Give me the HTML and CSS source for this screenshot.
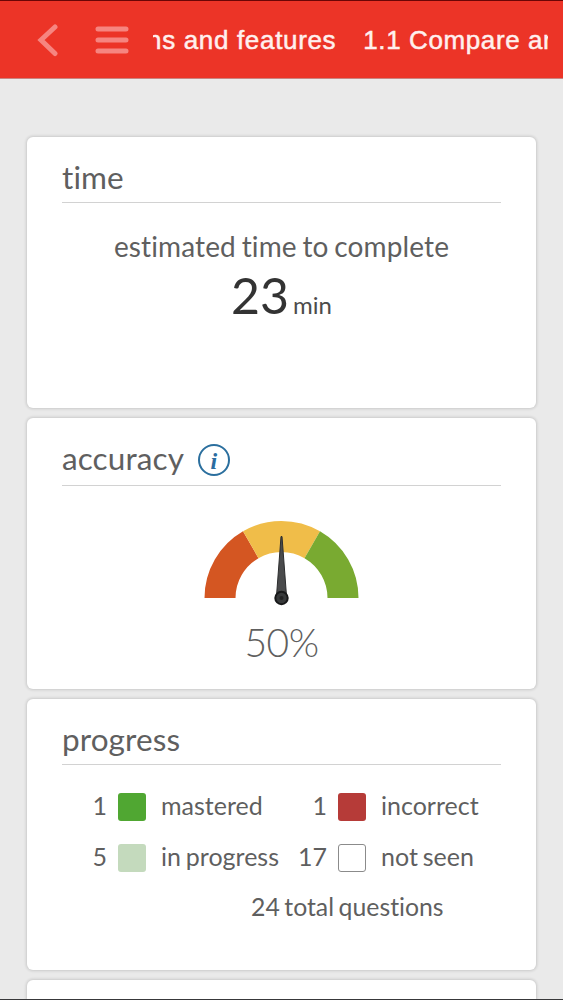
FILE: index.html
```html
<!DOCTYPE html>
<html lang="en">
  <head>
    <meta charset="UTF-8" />
    <meta name="viewport" content="width=device-width, initial-scale=1.0" />
    <title>Study progress</title>
    <link rel="stylesheet" href="styles.css">
  </head>
  <body>
    <header class="topbar">
      <svg class="icon-back" width="22" height="34" viewBox="0 0 22 34">
        <path d="M19 4 L5 17 L19 30.5" />
      </svg>
      <svg class="icon-menu" width="34" height="28" viewBox="0 0 34 28">
        <path d="M3 3H31M3 14H31M3 25H31" />
      </svg>
      <div class="ticker">
        <span class="ticker-item first">ns and features</span>
        <span class="ticker-item">1.1 Compare and</span>
      </div>
    </header>

    <main class="cards">
      <section class="card">
        <h2>time</h2>
        <div class="time-body">
          <p class="label">estimated time to complete</p>
          <p class="minutes"><span class="number">23</span><span class="unit">min</span></p>
        </div>
      </section>

      <section class="card">
        <h2 class="with-info">
          <span>accuracy</span>
          <span class="info">i</span>
        </h2>
        <div class="gauge">
          <svg width="155" height="88" viewBox="0.5 0 155 88">
            <!-- red, yellow and green bands, 60 degrees each -->
            <path fill="#d45622" d="M1 78A77 77 0 0 1 39.5 11.3L55 38.2A46 46 0 0 0 32 78Z" />
            <path fill="#f0bd49" d="M39.5 11.3A77 77 0 0 1 116.5 11.3L101 38.2A46 46 0 0 0 55 38.2Z" />
            <path fill="#79aa31" d="M116.5 11.3A77 77 0 0 1 155 78H124A46 46 0 0 0 101 38.2Z" />
            <!-- needle -->
            <path fill="#4a4b4c" stroke="#2c2d2e" stroke-width="1" d="M77.5 16.5H78.5L83 76H73Z" />
            <circle cx="78" cy="78" r="6.2" fill="#37393a" stroke="#171819" stroke-width="2" />
            <circle cx="78" cy="78" r="2" fill="#202122" />
          </svg>
          <p class="percent">50%</p>
        </div>
      </section>

      <section class="card">
        <h2>progress</h2>
        <div class="legend">
          <span class="count">1</span><span class="box mastered"></span><span class="name">mastered</span>
          <span class="count">1</span><span class="box incorrect"></span><span class="name">incorrect</span>
          <span class="count">5</span><span class="box in-progress"></span><span class="name">in progress</span>
          <span class="count">17</span><span class="box not-seen"></span><span class="name">not seen</span>
        </div>
        <p class="total">24 total questions</p>
      </section>

      <section class="card next"></section>
    </main>
  </body>
</html>
```

FILE: styles.css
```css
* {
  box-sizing: border-box;
  margin: 0;
  padding: 0;
}

body {
  font-family: Lato, "Liberation Sans", sans-serif;
  font-variant-ligatures: none;
  height: 100vh;
  overflow: hidden;
  background: #eaeaea;
  color: #5f5f5f;
  border-bottom: 1px solid #38383a;
}

/* Top bar */
.topbar {
  display: flex;
  align-items: center;
  height: 79px;
  padding: 0 15px 0 36px;
  background: #ec3427;
  border-top: 1px solid #6b0505;
  border-bottom: 1px solid #c98480;
}

.topbar svg {
  flex-shrink: 0;
  fill: none;
  stroke: #f68580;
  stroke-linecap: round;
  stroke-width: 5;
}

.icon-menu {
  margin-left: 37px;
}

.ticker {
  display: flex;
  flex: 1;
  margin-left: 24px;
  overflow: hidden;
  white-space: nowrap;
  font-family: "Liberation Sans", Arial, sans-serif;
  font-size: 26px;
  line-height: 34px;
  padding-top: 1px;
  letter-spacing: 0.6px;
  color: #fff0ee;
  -webkit-text-stroke: 0.5px #fff0ee;
}

.ticker-item {
  flex-shrink: 0;
  margin-left: 27px;
}

.ticker-item.first {
  margin-left: -6px;
  letter-spacing: 0.67px;
}

/* Cards */
.cards {
  display: flex;
  flex-direction: column;
  gap: 10px;
  padding: 58px 27px 0;
}

.card {
  flex-shrink: 0;
  height: 271px;
  padding: 22px 35px 0;
  background: #fff;
  border-radius: 6px;
  box-shadow: 0 0 3px 1px rgba(0, 0, 0, 0.14);
}

.card.next {
  height: 19px;
  padding: 0;
  border-radius: 6px 6px 0 0;
}

.card h2 {
  height: 44px;
  font-size: 31.5px;
  font-weight: 400;
  line-height: 37px;
  letter-spacing: 0.1px;
  border-bottom: 1px solid #d2d2d2;
}

.card h2.with-info {
  display: flex;
  gap: 14px;
  height: 46px;
}

.info {
  width: 32px;
  height: 32px;
  margin-top: 4px;
  border: 2px solid #2b6f9e;
  border-radius: 50%;
  font: italic bold 24px/31px "Liberation Serif", serif;
  text-align: center;
  color: #2b6ca0;
}

/* Time */
.time-body {
  padding-top: 26px;
  text-align: center;
}

.label {
  font-size: 28px;
  line-height: 34px;
  letter-spacing: 0.12px;
  word-spacing: -1.5px;
}

.minutes {
  line-height: 64px;
  color: #333;
}

.number {
  font-size: 50px;
}

.unit {
  margin-left: 4px;
  font-size: 24px;
  color: #4c4c4c;
}

/* Accuracy */
.gauge {
  display: flex;
  flex-direction: column;
  align-items: center;
  padding-top: 34px;
}

.percent {
  font-size: 39px;
  font-weight: 300;
  line-height: 48px;
  margin-top: 10px;
  letter-spacing: -0.5px;
}

/* Progress */
.legend {
  display: grid;
  grid-template-columns: 45px 28px 145px 47px 28px 1fr;
  row-gap: 23px;
  padding-top: 28px;
  font-size: 25px;
  line-height: 28px;
  word-spacing: -1.5px;
  white-space: nowrap;
}

.count,
.name {
  margin-top: -2px;
  height: 28px;
}

.count {
  text-align: right;
}

.box {
  width: 28px;
  height: 28px;
  margin-left: 11px;
  border-radius: 3px;
}

.name {
  margin-left: 26px;
}

.mastered {
  background: #50a732;
}

.incorrect {
  background: #b63b38;
}

.in-progress {
  background: #c4dabd;
}

.not-seen {
  border: 1px solid #8b8b8b;
}

.total {
  margin-top: 18px;
  padding-left: 189px;
  font-size: 24.8px;
  line-height: 34px;
  word-spacing: -1.8px;
}
```
